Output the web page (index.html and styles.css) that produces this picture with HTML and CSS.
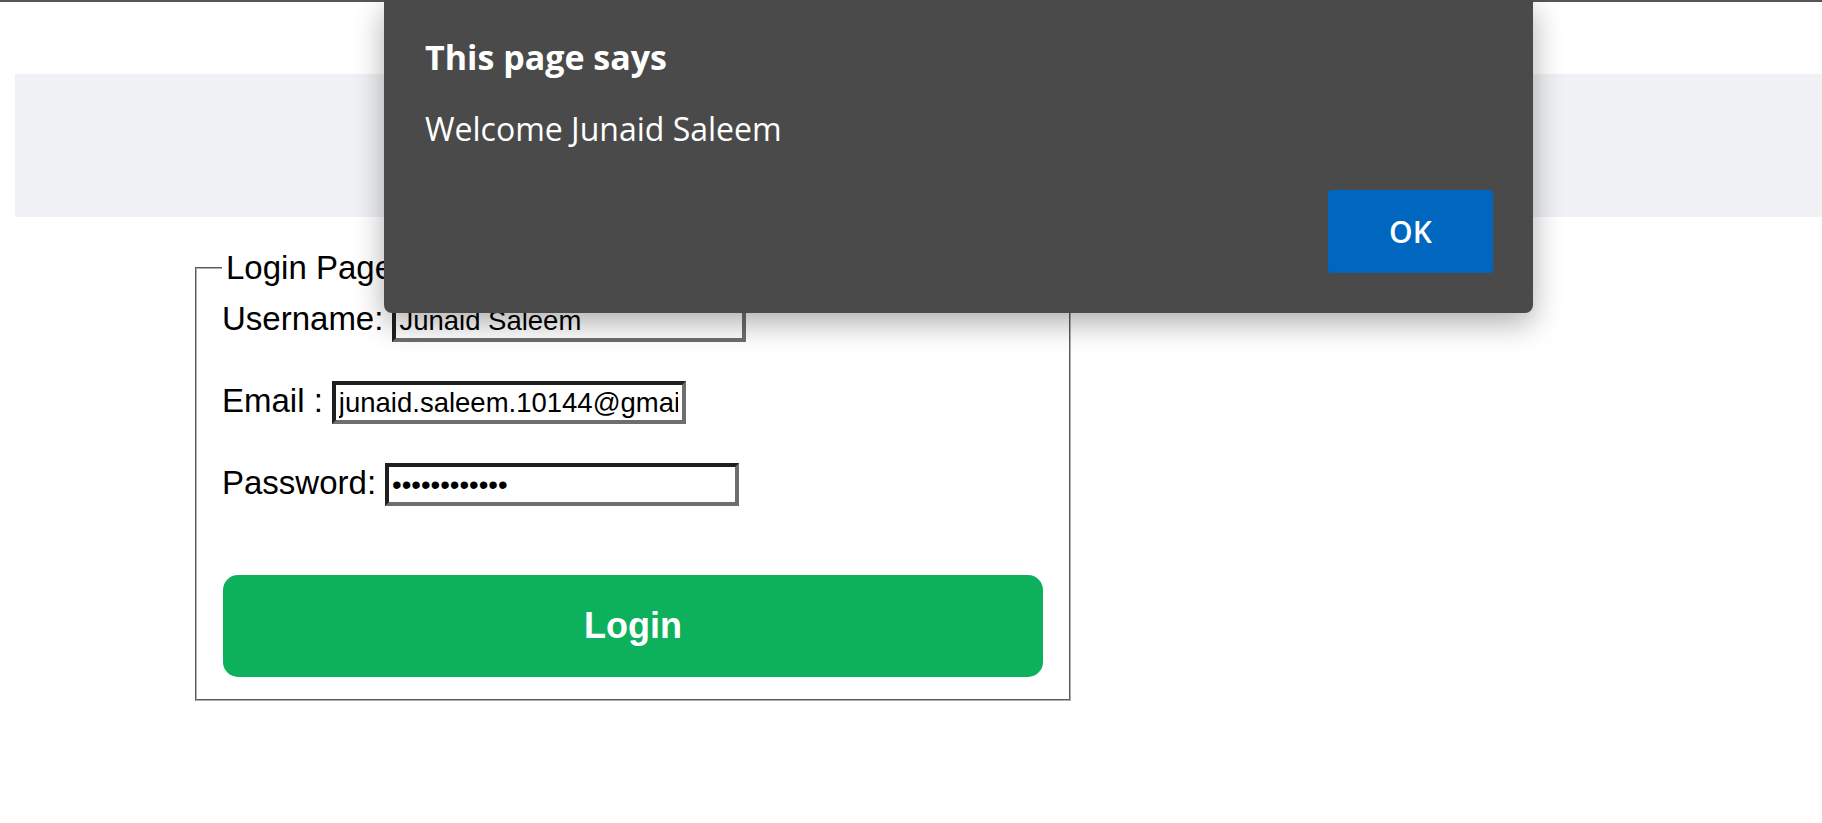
FILE: index.html
```html
<!DOCTYPE html>
<html lang="en">
<head>
<meta charset="utf-8">
<title>Login Page</title>
<link rel="stylesheet" href="styles.css">
</head>
<body>
  <div class="topline"></div>
  <main class="page">
    <div class="band"></div>
    <form class="form">
      <fieldset class="box">
        <legend class="legend">Login Page</legend>
        <div class="rows">
          <div class="row">
            <label class="label" for="u">Username:</label>
            <input class="field" id="u" type="text" value="Junaid Saleem">
          </div>
          <div class="row">
            <label class="label" for="e">Email :</label>
            <input class="field" id="e" type="text" value="junaid.saleem.10144@gmail.com">
          </div>
          <div class="row">
            <label class="label" for="p">Password:</label>
            <input class="field" id="p" type="password" value="junaid123456">
          </div>
        </div>
        <button class="login" type="button">Login</button>
      </fieldset>
    </form>
  </main>

  <div class="dialog" role="alertdialog">
    <div class="dialog-title">This page says</div>
    <div class="dialog-msg">Welcome Junaid Saleem</div>
    <div class="dialog-actions">
      <button class="ok" type="button">OK</button>
    </div>
  </div>
</body>
</html>
```

FILE: styles.css
```css
html, body {
  margin: 0;
  padding: 0;
  background: #ffffff;
}

body {
  font-family: "Liberation Sans", Arial, sans-serif;
  color: #000;
  overflow: hidden;
  height: 823px;
  position: relative;
}

.topline {
  height: 2px;
  background: #555555;
}

.page {
  display: flex;
  flex-direction: column;
}

.band {
  margin-top: 72px;
  margin-left: 15px;
  height: 143px;
  background: #f0f1f4;
}

.form {
  margin: 32px 0 0 195px;
}

.box {
  box-sizing: border-box;
  width: 876px;
  margin: 0;
  padding: 13px 25px 22px 25px;
  border: 2px groove #b0b0b0;
}

.legend {
  font-size: 33px;
  line-height: 37px;
  padding: 0 4px;
}

.rows {
  display: flex;
  flex-direction: column;
  gap: 39px;
}

.row {
  display: flex;
  align-items: baseline;
  gap: 9px;
}

.label {
  font-size: 33px;
  line-height: 38px;
}

.field {
  box-sizing: border-box;
  width: 354px;
  height: 43px;
  margin: 0;
  padding: 2px 4px 2px 3px;
  font-family: "Liberation Sans", Arial, sans-serif;
  font-size: 27.5px;
  color: #000;
  background: #fff;
  border-style: solid;
  border-width: 4px;
  border-color: #1f1f1f #6e6e6e #6e6e6e #1f1f1f;
  outline: none;
}

.login {
  display: block;
  box-sizing: border-box;
  width: 820px;
  height: 102px;
  margin: 69px 0 0 1px;
  border: 0;
  border-radius: 15px;
  background: #0eb15b;
  color: #ffffff;
  font-family: "Liberation Sans", Arial, sans-serif;
  font-weight: bold;
  font-size: 36px;
}

.dialog {
  position: absolute;
  left: 384px;
  top: 0;
  box-sizing: border-box;
  width: 1149px;
  height: 313px;
  padding: 37px 40px 40px 41px;
  background: #4a4a4a;
  border-radius: 0 0 8px 8px;
  box-shadow: 0 10px 30px rgba(0, 0, 0, 0.32);
  color: #ffffff;
  font-family: "Open Sans", "Noto Sans", sans-serif;
  display: flex;
  flex-direction: column;
}

.dialog-title {
  font-weight: bold;
  font-size: 34px;
  line-height: 41px;
}

.dialog-msg {
  margin-top: 31px;
  font-size: 32px;
  line-height: 40px;
}

.dialog-actions {
  margin-top: auto;
  display: flex;
  justify-content: flex-end;
}

.ok {
  width: 165px;
  height: 83px;
  border: 0;
  border-radius: 4px;
  background: #0067c0;
  color: #ffffff;
  font-family: "Open Sans", "Noto Sans", sans-serif;
  font-weight: 600;
  font-size: 30px;
}
```
